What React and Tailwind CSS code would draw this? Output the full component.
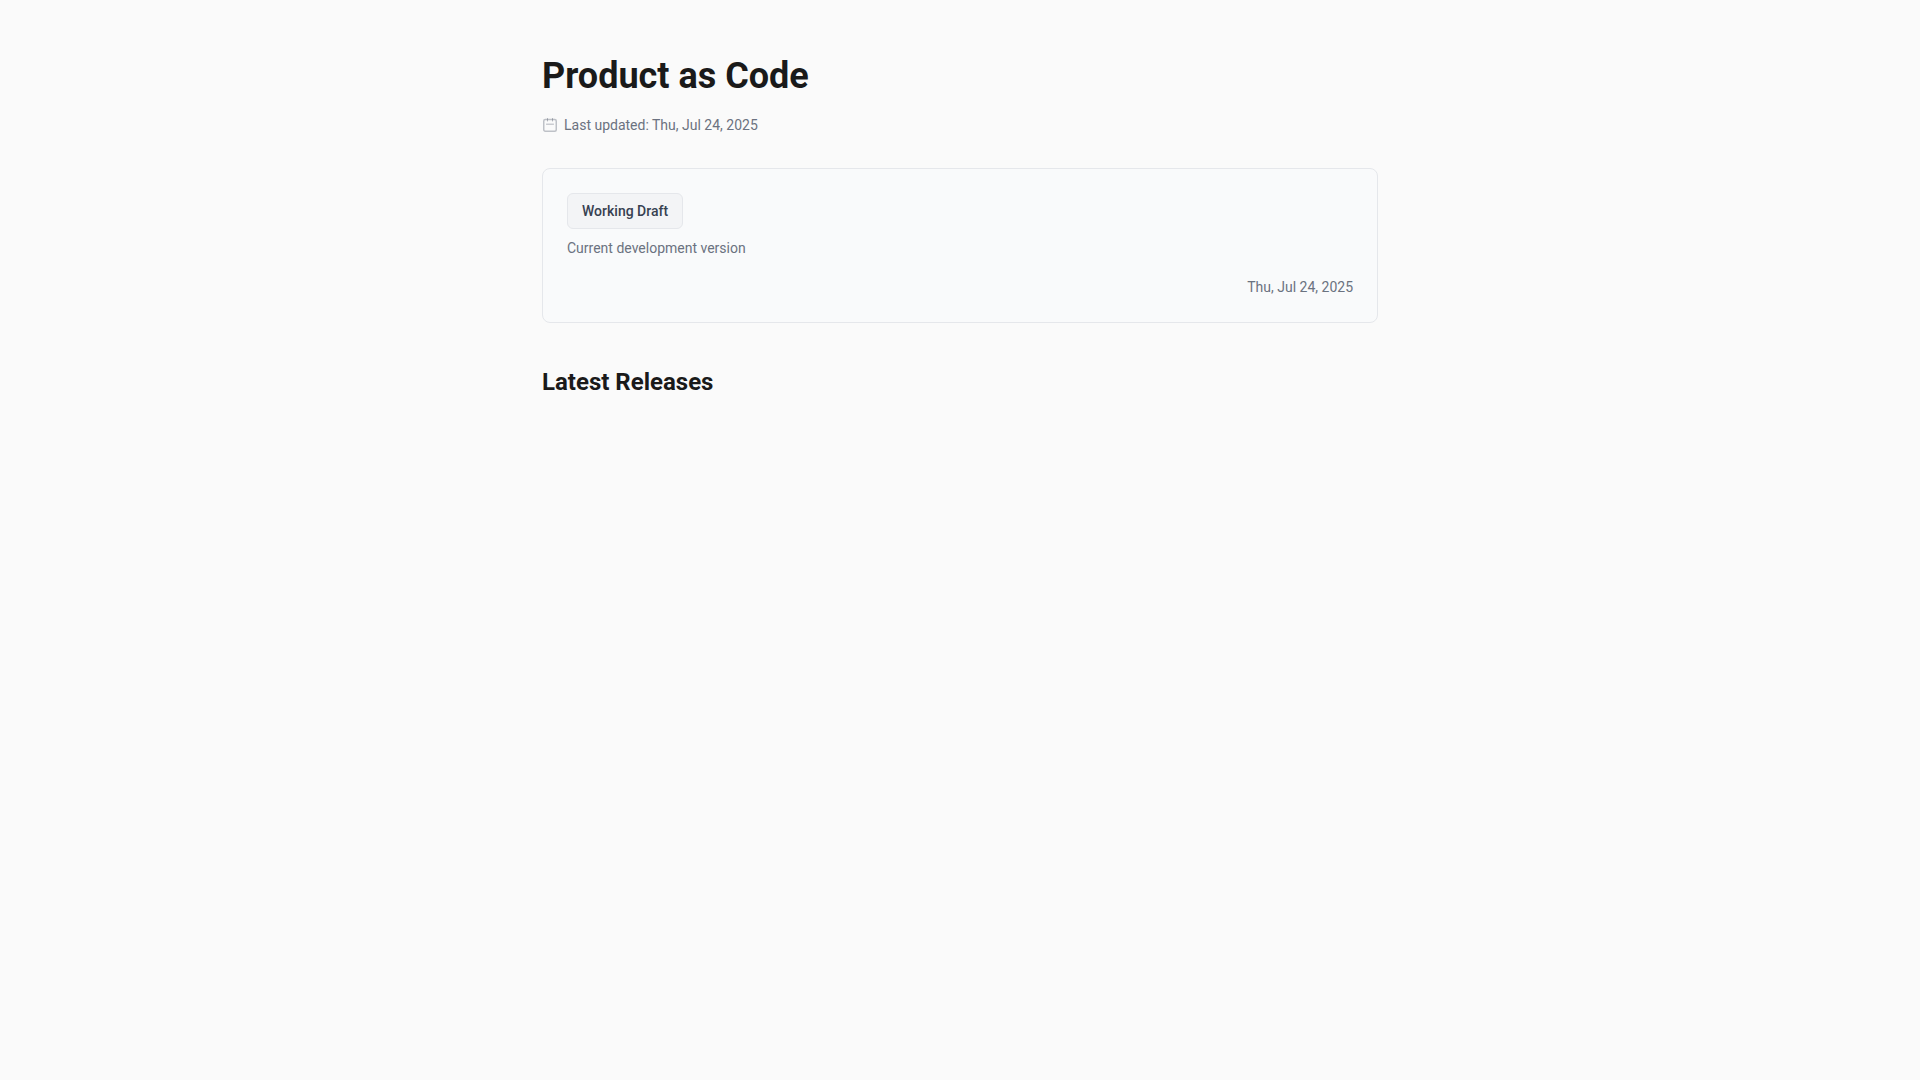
import React from "react";

function CalendarIcon() {
  return (
    <svg className="size-4 shrink-0 text-[#6b7280]" viewBox="0 0 16 16" fill="none" stroke="currentColor" strokeLinecap="round" strokeLinejoin="round" aria-hidden="true">
      <rect x="1.75" y="2.6" width="12.5" height="11.6" rx="1.5" strokeWidth="1.5" opacity="0.42" />
      <path d="M5.5 1.5v2.5M10.5 1.5v2.5M4.5 7.2h7" strokeWidth="1" opacity="0.5" />
    </svg>
  );
}

export default function App() {
  return (
    <div className="min-h-screen bg-[#fafafa] font-['Roboto',sans-serif] text-[#1a1a1a]">
      <main className="mx-auto max-w-[900px] px-8 py-12">
        <header className="mb-8">
          <h1 className="mb-2.5 text-4xl font-bold leading-14">Product as Code</h1>
          <p className="flex items-center gap-1.5 text-sm leading-[22px] text-[#6b7280]">
            <CalendarIcon />
            <span>Last updated: Thu, Jul 24, 2025</span>
          </p>
        </header>
        <section className="mb-10 rounded-lg border border-[#e5e7eb] bg-[#f9fafb] p-6 text-sm leading-[22px] text-[#6b7280]">
          <a href="#draft" className="block w-fit rounded-md border border-[#e5e7eb] bg-[#f3f4f6] px-3.5 py-1.5 font-medium text-[#374151]">Working Draft</a>
          <p className="mt-2">Current development version</p>
          <p className="mt-[17px] text-right">Thu, Jul 24, 2025</p>
        </section>
        <h2 className="text-2xl font-bold leading-[38px]">Latest Releases</h2>
      </main>
    </div>
  );
}
